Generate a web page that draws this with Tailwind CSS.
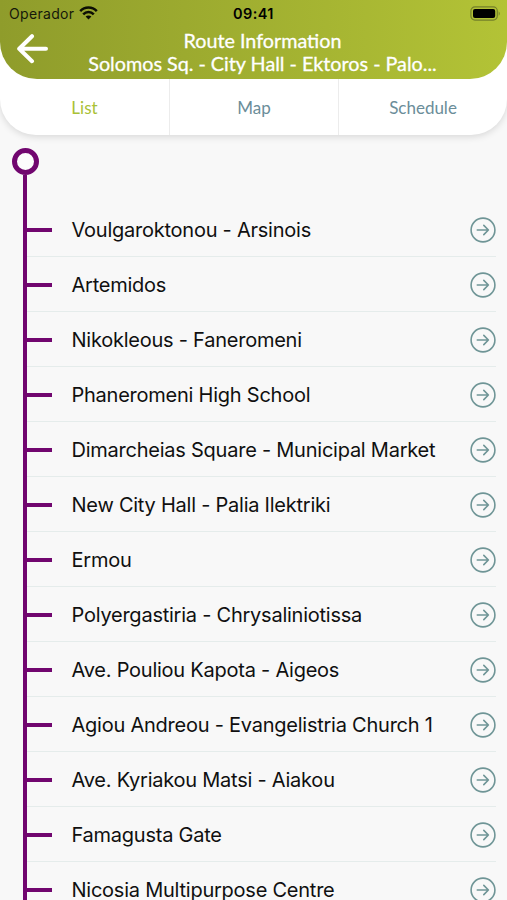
<!DOCTYPE html>
<html lang="en">
<head>
<meta charset="utf-8">
<title>Route Information</title>
<script src="https://cdn.jsdelivr.net/npm/@tailwindcss/browser@4"></script>
</head>
<body class="bg-[#f8f8f8] h-[900px] overflow-hidden">
<svg class="hidden"><symbol id="go" viewBox="0 0 26 26"><g fill="none" stroke="#6f9596" stroke-width="1.6" stroke-linecap="round" stroke-linejoin="round"><circle cx="13" cy="13" r="11.9"/><path d="M7.3 13H18.4M13.8 8.4L18.4 13L13.8 17.6"/></g></symbol></svg>
<header class="h-[135px] bg-white rounded-b-[36px] shadow-[0_2px_7px_rgba(0,0,0,0.13)] flex flex-col overflow-hidden">
  <div class="h-[79px] shrink-0 rounded-b-[37px] bg-linear-to-r from-[#8f9c2b] to-[#b3c336] overflow-hidden">
    <div class="h-[28px] grid grid-cols-3 items-center font-['Inter',sans-serif] text-[#15180a]">
      <div class="flex items-center gap-[5px] pl-[9px]">
        <span class="text-[14px] leading-[28px] tracking-[0.32px]">Operador</span>
        <svg class="w-[19px] h-[14px] -mt-[2px]" viewBox="0 0 19 14" fill="none" stroke="#0c0e04" stroke-width="2.5"><path d="M1.2 5.2C5.8 .4 13.2 .4 17.8 5.2M4.2 8.3C7.2 5.2 11.8 5.2 14.8 8.3"/><path d="M9.5 13.6L6.6 10.6C8.2 9 10.8 9 12.4 10.6Z" fill="#0c0e04" stroke="none"/></svg>
      </div>
      <div class="text-center text-[14.5px] tracking-[0.4px] font-semibold leading-[28px] text-black">09:41</div>
      <div class="flex justify-end pr-[6px]">
        <svg class="w-[31px] h-[15px] -mt-[2px]" viewBox="0 0 31 15"><rect x=".9" y=".9" width="26.4" height="13.2" rx="4" fill="none" stroke="#74802a" stroke-width="1.2"/><rect x="3" y="3" width="22.2" height="9" rx="2" fill="#000"/><path d="M28.7 5.2Q30.8 7.5 28.7 9.8Z" fill="#74802a"/></svg>
      </div>
    </div>
    <div class="flex h-[51px]">
      <svg class="w-[32px] h-[30px] ml-[17px] mt-[6px] shrink-0" viewBox="0 0 32 30" fill="none" stroke="#fff" stroke-width="4" stroke-linecap="round" stroke-linejoin="round"><path d="M15 2.2L2.2 14.8L15 27.2M2.2 14.8H29"/></svg>
      <div class="flex-1 pr-[31px] pt-[1px] text-center text-white font-['Lato',sans-serif] text-[19.75px] leading-[23px] whitespace-nowrap [-webkit-text-stroke:0.3px_white]">
        <div>Route Information</div>
        <div>Solomos Sq. - City Hall - Ektoros - Palo...</div>
      </div>
    </div>
  </div>
  <nav class="h-[56px] grid grid-cols-3 text-center font-['Lato',sans-serif] text-[17px] leading-[57px] text-[#6b8d99]">
    <div class="text-[#a9c136]">List</div>
    <div class="border-l border-[#ececec]">Map</div>
    <div class="border-l border-[#ececec]">Schedule</div>
  </nav>
</header>
<main class="font-['Inter',sans-serif] text-[20px] text-[#101010]">
  <div class="flex h-[67px] pl-[11px] pt-[13px]">
    <div class="flex flex-col items-center w-[28px]">
      <div class="size-[27px] shrink-0 rounded-full border-[5px] border-[#71066f] bg-[#fcfcfc]"></div>
      <div class="w-[4px] flex-1 bg-[#71066f]"></div>
    </div>
  </div>
  <div id="stops"></div>
</main>
<script>
const stops = [
  "Voulgaroktonou - Arsinois",
  "Artemidos",
  "Nikokleous - Faneromeni",
  "Phaneromeni High School",
  "Dimarcheias Square - Municipal Market",
  "New City Hall - Palia Ilektriki",
  "Ermou",
  "Polyergastiria - Chrysaliniotissa",
  "Ave. Pouliou Kapota - Aigeos",
  "Agiou Andreou - Evangelistria Church 1",
  "Ave. Kyriakou Matsi - Aiakou",
  "Famagusta Gate",
  "Nicosia Multipurpose Centre"
];
document.getElementById("stops").innerHTML = stops.map((name) => `
  <div class="flex h-[55px] pl-[23px]">
    <div class="w-[4px] shrink-0 bg-[#71066f]"></div>
    <div class="flex flex-1 items-center border-b border-[#e5eceb] mr-[11px] pt-[2px]">
      <div class="w-[25px] h-[4px] shrink-0 bg-[#71066f]"></div>
      <div class="flex-1 pl-[19.5px] whitespace-nowrap tracking-[-0.24px]">${name}</div>
      <svg class="size-[26px] shrink-0"><use href="#go"/></svg>
    </div>
  </div>`).join("");
</script>
</body>
</html>
